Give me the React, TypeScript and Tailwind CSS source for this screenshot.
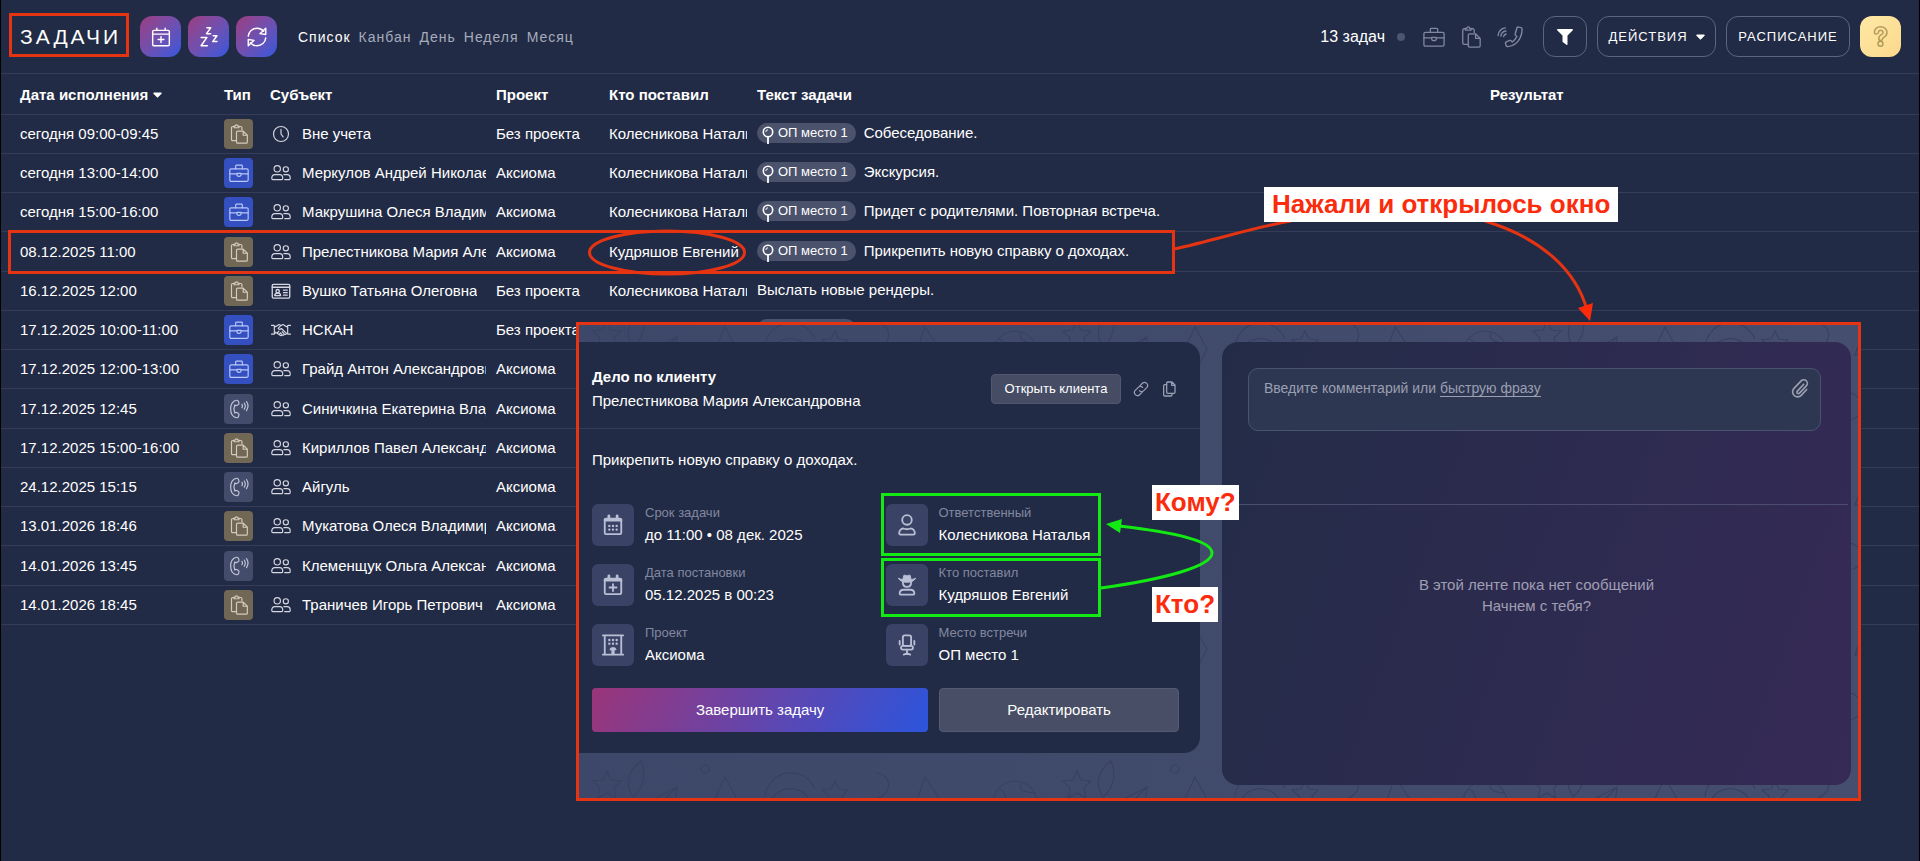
import type { ReactNode } from "react"

type IconProps = { className?: string }

function Icon({ className, children, width = 1.4 }: IconProps & { children: ReactNode; width?: number }) {
  return (
    <svg
      viewBox="0 0 24 24"
      fill="none"
      stroke="currentColor"
      strokeWidth={width}
      strokeLinecap="round"
      strokeLinejoin="round"
      className={className}
      aria-hidden="true"
    >
      {children}
    </svg>
  )
}

const BriefcaseIcon = ({ className }: IconProps) => (
  <Icon className={className}>
    <rect x="1" y="7" width="22" height="15" rx="1.5" />
    <path d="M8 7V3.500a1 1 0 0 1 1-1h6a1 1 0 0 1 1 1V7M1 13h8.500M14.500 13H23M9.500 12.500h5v1a2.500 2.500 0 0 1-5 0z" />
  </Icon>
)

const FilesIcon = ({ className }: IconProps) => (
  <Icon className={className}>
    <path d="M9 20H4.500A1.500 1.500 0 0 1 3 18.500v-14A1.500 1.500 0 0 1 4.500 3H6M12 3h2A1.500 1.500 0 0 1 15.500 4.500V7" />
    <path d="M6 4.500V2.500h1.500a1.500 1.500 0 0 1 3 0H12v2z" />
    <path d="M10.500 8.500H17l5 5V21.500a1.500 1.500 0 0 1-1.500 1.500h-10A1.500 1.500 0 0 1 9 21.500V10a1.500 1.500 0 0 1 1.500-1.500zM17 8.500v5h5" />
  </Icon>
)

const HandsetIcon = ({ className }: IconProps) => (
  <Icon className={className}>
    <path d="M9 1.500C4.500 2.500 2 7 2 12s2.500 9.500 7 10.500c1.200.2 2-.4 2.400-1.500l.5-1.700c.3-1-.1-1.700-1-2.200l-1.700-.9c-.9-.4-1.700-.1-2.300.6-1.200-2.900-1.200-6.700 0-9.600.6.7 1.400 1 2.300.6l1.700-.9c.9-.5 1.300-1.200 1-2.200L11.400 3c-.4-1.100-1.200-1.700-2.400-1.500z" />
    <path d="M15.500 6.500a3.500 3.500 0 0 1 0 4M18.300 4.800a6.500 6.500 0 0 1 0 7.400M21 3a10 10 0 0 1 0 11" />
  </Icon>
)

const IncomingCallIcon = ({ className }: IconProps) => (
  <svg viewBox="0 0 28 24" fill="none" stroke="currentColor" strokeWidth="1.500" strokeLinecap="round" strokeLinejoin="round" className={className} aria-hidden="true">
    <path d="M21.500 2.200c.3-.8 1-1.200 1.800-1l2.700.6c.8.200 1.200.8 1.200 1.600C27 14 21 21.500 11.500 22.500c-.8.100-1.500-.3-1.700-1l-.7-2.300c-.2-.8.100-1.500.9-1.900l3.700-1.500c.7-.3 1.400-.1 1.800.5l1 1.200c2.300-1.600 4-3.700 5-6.200l-1.300-1c-.6-.5-.8-1.200-.5-1.900z" />
    <path d="M1 10.500C1.500 6 4.500 2.500 9 2M4 11c.4-3 2.500-5.300 5.500-5.600M7 11.500c.3-1.400 1.300-2.500 2.800-2.800" />
  </svg>
)

const PeopleIcon = ({ className }: IconProps) => (
  <Icon className={className}>
    <circle cx="7.500" cy="7" r="3.800" />
    <circle cx="17.800" cy="7.600" r="3.100" />
    <path d="M1 19v-1.500A3.500 3.500 0 0 1 4.500 14h6a3.500 3.500 0 0 1 3.500 3.500V19a1 1 0 0 1-1 1H2a1 1 0 0 1-1-1zM15.500 14h4a3.500 3.500 0 0 1 3.500 3.500V19a1 1 0 0 1-1 1h-5.500" />
  </Icon>
)

const ClockIcon = ({ className }: IconProps) => (
  <Icon className={className}>
    <circle cx="12" cy="12" r="9" />
    <path d="M12 6.500V12l2.500 3.500" />
  </Icon>
)

const CardIcon = ({ className }: IconProps) => (
  <Icon className={className} width={1.6}>
    <rect x="1.500" y="4" width="21" height="16.500" rx="1.500" />
    <path d="M1.500 7.500h21M15 11h4.500M15 14h4.500M15 17h4.500M4.500 17.500a3.500 3 0 0 1 7 0z" />
    <circle cx="8" cy="12.200" r="2" />
  </Icon>
)

const HandshakeIcon = ({ className }: IconProps) => (
  <Icon className={className}>
    <path d="M0.500 6.500h3l2 1.500 4-2.500 2.500 1 2.500-1 4 2.500 2-1.500h3M.500 17h3l1.500-1M23.500 17h-3L19 16M4 7v9M20 7v9" />
    <path d="M12 6.500 8.500 10c.8 1.600 2.600 1.600 4 .2L18.500 16c-.3 1.500-1.500 1.700-2.500 1-.4 1.300-1.600 1.600-2.600.9-.7 1-2 1-2.900.1L5 14.500M8 15l1.500-1.500M10 17l1.500-1.500M13.500 14l2.500 3M11.500 15.500l2 2.400" />
  </Icon>
)

const CalendarPlusIcon = ({ className }: IconProps) => (
  <Icon className={className} width={1.7}>
    <rect x="2" y="4" width="20" height="18.500" rx="1.500" />
    <path d="M2 8.500h20M7 1.500V4M17 1.500V4M12 11.500v7M8.500 15h7" />
  </Icon>
)

const SnoozeIcon = ({ className }: IconProps) => (
  <Icon className={className} width={1.8}>
    <path d="M9.500 1h4.500l-5 7h5M2.500 12.500h7l-7 10h7.500M17 10.500h4.500l-5 7h5" />
  </Icon>
)

const RefreshIcon = ({ className }: IconProps) => (
  <Icon className={className} width={1.7}>
    <path d="M1.500 11C2 5.500 6.500 1.500 12 1.500c3.200 0 6 1.400 8 3.700M22.500 13C22 18.500 17.500 22.500 12 22.500c-3.200 0-6-1.400-8-3.700" />
    <path d="M22.500 1.500v7.500L15.500 8zM1.500 22.500V15l7 1z" />
  </Icon>
)

const PinIcon = ({ className }: IconProps) => (
  <svg viewBox="0 0 12 20" fill="none" stroke="currentColor" className={className} aria-hidden="true">
    <circle cx="6" cy="6" r="4.700" strokeWidth="1.600" />
    <path d="M6 10.700V18" strokeWidth="1.800" />
    <path d="M3.800 6A2.200 2.200 0 0 1 6 3.800" strokeWidth="1" />
  </svg>
)

const QuestionIcon = ({ className }: IconProps) => (
  <Icon className={className} width={1.7}>
    <path d="M5 7.500C5 3.500 8 .9 12 .9s7.400 2.600 7.400 6.500c0 3-1.800 4.500-4 5.800-.8.500-1.100.8-1.100 1.300a2.100 2.100 0 0 1-4.200 0c0-2.600 1.300-3.800 3.200-4.900 1.200-.7 1.700-1.200 1.700-2.200A2.700 2.700 0 0 0 12 4.900c-1.400 0-2.200.8-2.500 2.600-.4 2.400-4.500 2.300-4.500 0z" />
    <circle cx="12" cy="20.300" r="2.800" />
  </Icon>
)

const CalendarIcon = ({ className }: IconProps) => (
  <Icon className={className} width={2}>
    <rect x="3" y="5" width="18" height="17" rx="1.500" />
    <path d="M3.500 6.500h17" strokeWidth="3.500" />
    <path d="M7.500 2v3M16.500 2v3" strokeWidth="3" />
    <path d="M8 13h.01M12 13h.01M16 13h.01M8 17h.01M12 17h.01M16 17h.01" strokeWidth="2.600" />
  </Icon>
)

const CalendarAddIcon = ({ className }: IconProps) => (
  <Icon className={className} width={2}>
    <rect x="3" y="5" width="18" height="17" rx="1.500" />
    <path d="M3.500 6.500h17" strokeWidth="3.500" />
    <path d="M7.500 2v3M16.500 2v3" strokeWidth="3" />
    <path d="M12 11v7.500M8.200 14.700h7.600" />
  </Icon>
)

const BuildingIcon = ({ className }: IconProps) => (
  <Icon className={className} width={2}>
    <path d="M1 1.500h22M1 22.500h22M3 2v20M21 2v20" />
    <path d="M8 6.500h.01M12 6.500h.01M16 6.500h.01M8 10.500h.01M12 10.500h.01M16 10.500h.01" strokeWidth="2.600" />
    <path d="M8.500 17.500a3.500 3 0 0 1 7 0h-2v5h-3v-5z" fill="currentColor" strokeWidth="0.500" />
  </Icon>
)

const PersonIcon = ({ className }: IconProps) => (
  <Icon className={className} width={2}>
    <circle cx="12" cy="6.500" r="5.200" />
    <path d="M3.500 21a5 5 0 0 1 4.500-5.200c2.500 1 5.500 1 8 0a5 5 0 0 1 4.500 5.200 1.500 1.500 0 0 1-1.500 1.500H5A1.500 1.500 0 0 1 3.500 21z" />
  </Icon>
)

const HatPersonIcon = ({ className }: IconProps) => (
  <Icon className={className} width={2}>
    <path d="M7.500 6 8.500 1.500c1.300-.6 2.200.3 3.500.3s2.200-.9 3.500-.3l1 4.500c1.800-.1 3.300-.6 5-1.500-2 3.300-5 4.500-9.500 4.500S4.500 7.800 2.500 4.500c1.700.9 3.200 1.400 5 1.500z" fill="currentColor" strokeWidth="1" />
    <path d="M7.500 9c0 3 1.500 5 4.500 5s4.500-2 4.500-5M4 21.500c0-2.500 1.700-4.300 4.200-4.300h7.600c2.500 0 4.200 1.800 4.200 4.300a1 1 0 0 1-1 1H5a1 1 0 0 1-1-1z" />
  </Icon>
)

const ChairIcon = ({ className }: IconProps) => (
  <Icon className={className} width={2}>
    <rect x="7.500" y="1.500" width="9" height="11.500" rx="2" />
    <rect x="5.500" y="13" width="13" height="4" rx="2" />
    <path d="M4 7.500v4M20 7.500v4M12 17v5M8.500 22.500 12 21l3.500 1.500" />
  </Icon>
)

const LinkIcon = ({ className }: IconProps) => (
  <Icon className={className} width={1.8}>
    <path d="m10.500 7 3.600-3.600a4.600 4.600 0 0 1 6.500 6.500l-4.500 4.500a4.600 4.600 0 0 1-6.500 0" />
    <path d="m13.500 17-3.600 3.600a4.600 4.600 0 0 1-6.500-6.500l4.500-4.500a4.600 4.600 0 0 1 6.500 0" />
  </Icon>
)

const CopyIcon = ({ className }: IconProps) => (
  <Icon className={className} width={1.9}>
    <path d="M10 1.500h6.500L21 6v11a1.500 1.500 0 0 1-1.500 1.500H10A1.500 1.500 0 0 1 8.500 17V3A1.500 1.500 0 0 1 10 1.500zM16 1.500v5h5" />
    <path d="M8.500 5.500h-3A1.500 1.500 0 0 0 4 7v14a1.500 1.500 0 0 0 1.500 1.500H15a1.500 1.500 0 0 0 1.500-1.500v-2.500" />
  </Icon>
)

const ClipIcon = ({ className }: IconProps) => (
  <Icon className={className} width={2}>
    <path d="m16.500 7.500-7.700 8.200a1.800 1.800 0 0 0 2.600 2.500l8.200-8.800a4.300 4.300 0 0 0-6.200-6L4.800 12.500a6 6 0 0 0 8.700 8.300l6.500-7" />
  </Icon>
)

const Caret = () => (
  <svg viewBox="0 0 10 6" className="w-[9px] h-[6px]" fill="currentColor" aria-hidden="true">
    <path d="M1 .300h8a.7.700 0 0 1 .5 1.200L5.600 5.600a.8.800 0 0 1-1.200 0L.5 1.500A.7.700 0 0 1 1 .300z" />
  </svg>
)

const typeStyles = {
  doc: { label: "Документы", box: "bg-[#716755] text-[#d3ccbd]", icon: FilesIcon },
  meet: { label: "Встреча", box: "bg-[#344fc0] text-[#b9c8f7]", icon: BriefcaseIcon },
  call: { label: "Звонок", box: "bg-[#434c6a] text-[#c3c8d8]", icon: HandsetIcon },
}

const subjectIcons = { clock: ClockIcon, people: PeopleIcon, card: CardIcon, deal: HandshakeIcon }

type Task = {
  date: string
  type: keyof typeof typeStyles
  kind: keyof typeof subjectIcons
  subject: string
  project: string
  author?: string
  place?: string
  text?: string
}

const tasks: Task[] = [
  { date: "сегодня 09:00-09:45", type: "doc", kind: "clock", subject: "Вне учета", project: "Без проекта", author: "Колесникова Наталья", place: "ОП место 1", text: "Собеседование." },
  { date: "сегодня 13:00-14:00", type: "meet", kind: "people", subject: "Меркулов Андрей Николаевич", project: "Аксиома", author: "Колесникова Наталья", place: "ОП место 1", text: "Экскурсия." },
  { date: "сегодня 15:00-16:00", type: "meet", kind: "people", subject: "Макрушина Олеся Владимировна", project: "Аксиома", author: "Колесникова Наталья", place: "ОП место 1", text: "Придет с родителями. Повторная встреча." },
  { date: "08.12.2025 11:00", type: "doc", kind: "people", subject: "Прелестникова Мария Александровна", project: "Аксиома", author: "Кудряшов Евгений", place: "ОП место 1", text: "Прикрепить новую справку о доходах." },
  { date: "16.12.2025 12:00", type: "doc", kind: "card", subject: "Вушко Татьяна Олеговна", project: "Без проекта", author: "Колесникова Наталья", text: "Выслать новые рендеры." },
  { date: "17.12.2025 10:00-11:00", type: "meet", kind: "deal", subject: "НСКАН", project: "Без проекта", place: "ОП место 1" },
  { date: "17.12.2025 12:00-13:00", type: "meet", kind: "people", subject: "Грайд Антон Александрович", project: "Аксиома" },
  { date: "17.12.2025 12:45", type: "call", kind: "people", subject: "Синичкина Екатерина Владимировна", project: "Аксиома" },
  { date: "17.12.2025 15:00-16:00", type: "doc", kind: "people", subject: "Кириллов Павел Александрович", project: "Аксиома" },
  { date: "24.12.2025 15:15", type: "call", kind: "people", subject: "Айгуль", project: "Аксиома" },
  { date: "13.01.2026 18:46", type: "doc", kind: "people", subject: "Мукатова Олеся Владимировна", project: "Аксиома" },
  { date: "14.01.2026 13:45", type: "call", kind: "people", subject: "Клеменщук Ольга Александровна", project: "Аксиома" },
  { date: "14.01.2026 18:45", type: "doc", kind: "people", subject: "Траничев Игорь Петрович", project: "Аксиома" },
]

const details = [
  { label: "Срок задачи", value: "до 11:00 • 08 дек. 2025", icon: CalendarIcon },
  { label: "Ответственный", value: "Колесникова Наталья", icon: PersonIcon },
  { label: "Дата постановки", value: "05.12.2025 в 00:23", icon: CalendarAddIcon },
  { label: "Кто поставил", value: "Кудряшов Евгений", icon: HatPersonIcon },
  { label: "Проект", value: "Аксиома", icon: BuildingIcon },
  { label: "Место встречи", value: "ОП место 1", icon: ChairIcon },
]

const quickActions = [
  { label: "Новая задача", icon: CalendarPlusIcon },
  { label: "Отложить", icon: SnoozeIcon },
  { label: "Обновить", icon: RefreshIcon },
]

function Header() {
  return (
    <header className="flex items-center pl-[19px] pr-[18px] py-4">
      <h1 className="w-[120px] text-[21px] leading-7 tracking-[3px]">ЗАДАЧИ</h1>
      <div className="flex gap-[7px]">
        {quickActions.map(({ label, icon: ActionIcon }) => (
          <button
            key={label}
            aria-label={label}
            className="size-[41px] rounded-xl bg-linear-to-br from-[#9b3a80] to-[#2f56de] flex items-center justify-center"
          >
            <ActionIcon className="size-5" />
          </button>
        ))}
      </div>
      <nav className="flex gap-2 ml-[21px] text-sm tracking-[1px] text-[#a6abbd]">
        <a href="#list" className="text-white">Список</a>
        <a href="#kanban">Канбан</a>
        <a href="#day">День</a>
        <a href="#week">Неделя</a>
        <a href="#month">Месяц</a>
      </nav>

      <div className="flex items-center ml-auto">
        <span className="text-base">13 задач</span>
        <span className="size-2 rounded-full bg-[#4d5570] ml-3" />
        <div className="flex items-center gap-[15px] ml-[18px] mr-5 text-[#8288a0]">
          <BriefcaseIcon className="size-[22px]" />
          <FilesIcon className="size-[22px]" />
          <IncomingCallIcon className="w-[26px] h-[22px]" />
        </div>
        <div className="flex gap-[10px] text-[13px] tracking-[1px]">
          <button aria-label="Фильтр" className="w-11 h-[41px] rounded-xl border border-[#5d647e] flex items-center justify-center">
            <svg viewBox="0 0 16 16" className="size-4" fill="currentColor" aria-hidden="true">
              <path d="M.8 0h14.400c.7 0 1 .8.600 1.300L10.500 6.500v9c0 .4-.4.600-.8.400L6 13.200a1 1 0 0 1-.5-.8V6.500L.2 1.300C-.2.800.1 0 .8 0z" />
            </svg>
          </button>
          <button className="w-[119px] h-[41px] rounded-xl border border-[#5d647e] flex items-center justify-center gap-2">
            ДЕЙСТВИЯ <Caret />
          </button>
          <button className="w-[124px] h-[41px] rounded-xl border border-[#5d647e]">РАСПИСАНИЕ</button>
          <button
            aria-label="Помощь"
            className="size-[41px] rounded-xl bg-linear-to-br from-[#ffe9a6] to-[#fbd88b] text-[#b39a5b] flex items-center justify-center"
          >
            <QuestionIcon className="size-[21px]" />
          </button>
        </div>
      </div>
    </header>
  )
}

function TaskTable() {
  return (
    <table className="w-full table-fixed border-separate border-spacing-0 border-t border-[#343c58] text-left text-[15px] leading-5 [&_td]:border-b [&_td]:border-[#343c58] [&_td]:p-0 [&_th]:border-b [&_th]:border-[#343c58] [&_th]:p-0 [&_th]:pt-[2px]">
      <colgroup>
        <col className="w-[223px]" />
        <col className="w-[46px]" />
        <col className="w-[226px]" />
        <col className="w-[113px]" />
        <col className="w-[148px]" />
        <col className="w-[733px]" />
        <col />
      </colgroup>
      <thead>
        <tr className="h-[41px]">
          <th>
            <span className="flex items-center gap-[5px] pl-[19px]">
              Дата исполнения <Caret />
            </span>
          </th>
          <th>Тип</th>
          <th>Субъект</th>
          <th>Проект</th>
          <th>Кто поставил</th>
          <th>Текст задачи</th>
          <th>Результат</th>
        </tr>
      </thead>
      <tbody>
        {tasks.map((task) => {
          const type = typeStyles[task.type]
          const SubjectIcon = subjectIcons[task.kind]
          return (
            <tr key={task.date} className="h-[39px] nth-[4n]:h-10">
              <td>
                <div className="pl-[19px]">{task.date}</div>
              </td>
              <td>
                <div role="img" aria-label={type.label} className={`flex items-center justify-center w-[29px] h-[30px] rounded-sm ${type.box}`}>
                  <type.icon className="size-5" />
                </div>
              </td>
              <td>
                <div className="flex items-center gap-[11px] pl-px pr-[10px]">
                  <SubjectIcon className="size-5 shrink-0 text-[#d5d8e2]" />
                  <span className="overflow-hidden whitespace-nowrap">{task.subject}</span>
                </div>
              </td>
              <td className="whitespace-nowrap">{task.project}</td>
              <td>
                <div className="mr-[10px] overflow-hidden whitespace-nowrap">{task.author}</div>
              </td>
              <td>
                <div className="flex items-center gap-2 pb-[2px]">
                  {task.place && (
                    <span className="flex items-center gap-1 h-5 pl-[5px] pr-2 rounded-[10px] bg-[#4b526b] text-[13px]">
                      <PinIcon className="w-3 h-5 mt-[6px]" />
                      {task.place}
                    </span>
                  )}
                  {task.text}
                </div>
              </td>
              <td></td>
            </tr>
          )
        })}
      </tbody>
    </table>
  )
}

// Faint doodles behind the window panels
function Doodles() {
  return (
    <svg className="absolute inset-0 w-full h-full text-[#374060]" aria-hidden="true">
      <defs>
        <pattern id="doodles" width="470" height="150" patternUnits="userSpaceOnUse" patternTransform="translate(6 -18)">
          <g fill="none" stroke="currentColor" strokeWidth="1.200">
            <path d="m22 14 4 9 10 1-7 7 2 10-9-5-9 5 2-10-7-7 10-1z" />
            <path d="m92 30-30 16 10 4 3 10 5-8 9 3zM72 50l20-20" />
            <path d="M56 4c-14 10-16 24-8 36 10-8 14-22 8-36z" />
            <circle cx="120" cy="12" r="4" />
            <path d="m106 62 14 10m4 3a3 3 0 1 0 .1 0M140 20l-12 26h10l6 12 8-16z" />
            <circle cx="430" cy="46" r="22" />
            <path d="M414 32c8 2 4 12 12 12s6 10 0 18M436 26c-4 8 8 10 14 10M440 52c-6 4-2 10 4 8" />
            <path d="M362 94h42v30h-42zM362 104h42M368 94V82h30v12M370 110h10v10h-10zM386 110h10v10h-10z" />
            <path d="m60 96 3 7 8 1-6 5 2 8-7-4-7 4 2-8-6-5 8-1z" />
            <path d="M10 80c12-8 24 0 20 12s-20 16-26 8M92 102c10-14 26-8 28 4s-16 20-24 14" />
            <circle cx="22" cy="125" r="9" />
            <circle cx="22" cy="125" r="3" />
            <path d="M180 40a26 26 0 0 1 50-8M184 48a22 22 0 0 1 40-6M250 24l4 8 9 1-6 6 1 9-8-4-8 4 2-9-7-6 9-1z" />
            <path d="M290 16c12 0 16 10 12 18s-20 8-18 22M310 90c12-10 28-2 26 12s-22 14-28 6M318 100a3 3 0 1 0 .1 0" />
            <path d="M170 96c8-12 22-10 26 0s-8 22-14 30M230 90l8 20 14-14M262 112a10 10 0 1 0 20 0 10 10 0 1 0-20 0M340 20l16 24-26 4z" />
          </g>
        </pattern>
      </defs>
      <rect width="100%" height="100%" fill="url(#doodles)" />
    </svg>
  )
}

function TaskWindow() {
  return (
    <div role="dialog" aria-label="Дело по клиенту" className="absolute left-[575px] right-[58px] top-[322px] border-[3px] border-[#e63312] bg-linear-to-r from-[#3d4769] to-[#454e6e]">
      <Doodles />
      <div className="relative flex items-start gap-[22px] pt-[17px] pb-[13px] pr-[7px] text-[15px] leading-6">
        <section className="flex-[621] min-w-0 rounded-r-2xl bg-[#222b45]">
          <div className="flex items-center justify-between pt-[23px] pb-[15px] pl-[13px] pr-[21px] border-b border-[#343c58]">
            <div>
              <h2 className="font-bold">Дело по клиенту</h2>
              <p>Прелестникова Мария Александровна</p>
            </div>
            <div className="flex items-center text-[#9aa0b4]">
              <button className="w-[130px] h-[30px] rounded-sm bg-[#454c64] border border-[#50576f] text-[13px] leading-5 text-white">
                Открыть клиента
              </button>
              <button aria-label="Скопировать ссылку" className="ml-3">
                <LinkIcon className="size-4" />
              </button>
              <button aria-label="Копировать" className="ml-3 mr-[2px]">
                <CopyIcon className="size-4" />
              </button>
            </div>
          </div>

          <div className="pl-[13px] pr-[21px] pt-[19px] pb-[21px]">
            <p>Прикрепить новую справку о доходах.</p>
            <dl className="grid grid-cols-2 gap-y-[18px] mt-8">
              {details.map(({ label, value, icon: DetailIcon }) => (
                <div key={label} className="flex items-center gap-[11px] h-[42px]">
                  <span className="flex items-center justify-center size-[42px] rounded-md bg-[#3a4366] text-[#b9bfd4]">
                    <DetailIcon className="size-[22px]" />
                  </span>
                  <div>
                    <dt className="text-[13px] leading-5 text-[#8188a0]">{label}</dt>
                    <dd>{value}</dd>
                  </div>
                </div>
              ))}
            </dl>
            <div className="flex gap-[11px] mt-[22px]">
              <button className="flex-[338] h-11 rounded-sm bg-linear-[120deg] from-[#9b3579] to-[#2c55dd]">Завершить задачу</button>
              <button className="flex-[239] h-11 rounded-sm bg-[#474e65] border border-[#535a72]">Редактировать</button>
            </div>
          </div>
        </section>

        <section className="flex-[629] min-w-0 pt-[26px] pb-[169px] rounded-2xl bg-linear-[110deg] from-[#232c47] to-[#362a57]">
          <div className="relative ml-[26px] mr-[30px] text-sm leading-5 text-[#9a9fb2]">
            <textarea id="comment" className="block w-full h-[63px] resize-none rounded-[10px] border border-[#4a5370] bg-[#2e3751] px-4 py-[9px]" />
            <label htmlFor="comment" className="absolute left-4 top-[10px]">
              Введите комментарий или <a href="#phrases" className="border-b border-[#9a9fb2]">быструю фразу</a>
            </label>
            <button aria-label="Прикрепить файл" className="absolute right-[11px] top-[10px]">
              <ClipIcon className="size-5" />
            </button>
          </div>
          <div className="mt-[73px] mr-[3px] border-t border-[#4c4c6f]" />
          <p className="mt-[69px] text-center leading-[21px] text-[#a09eb3]">
            В этой ленте пока нет сообщений
            <br />
            Начнем с тебя?
          </p>
        </section>
      </div>
    </div>
  )
}

function Annotations() {
  return (
    <>
      <svg className="absolute inset-0 w-full h-full pointer-events-none" fill="none" aria-hidden="true">
        <g stroke="#e63312" strokeWidth="3">
          <rect x="9.500" y="14.500" width="117" height="41" />
          <rect x="8.500" y="231.500" width="1164" height="41" />
          <ellipse cx="666" cy="252.500" rx="77.500" ry="21.500" />
          <path d="M1173 249C1215 240 1250 228 1290 221" />
          <path d="M1484 221C1540 238 1575 270 1586 310" />
        </g>
        <path d="m1589 321-12-13 15-5z" fill="#ff2a0a" />
        <g stroke="#13ea13" strokeWidth="3">
          <rect x="881.500" y="494.500" width="217" height="60" />
          <rect x="881.500" y="559.500" width="217" height="56" />
          <path d="M1118 526C1170 532 1211 540 1211 553C1211 566 1165 579 1100 588" />
        </g>
        <path d="m1105 524 16-5-2 14z" fill="#13ea13" />
      </svg>
      <span className="absolute left-[1263px] top-[187px] px-2 bg-white text-[26px] leading-[35px] font-bold text-[#fb2c0d]">Нажали и открылось окно</span>
      <span className="absolute left-[1151px] top-[485px] px-[3px] bg-white text-[26px] leading-[35px] font-bold text-[#fb2c0d]">Кому?</span>
      <span className="absolute left-[1151px] top-[587px] px-[3px] bg-white text-[26px] leading-[35px] font-bold text-[#fb2c0d]">Кто?</span>
    </>
  )
}

export default function App() {
  return (
    <div className="relative min-h-screen overflow-hidden border-x border-black bg-[#222b45] font-['Liberation_Sans',Arial,sans-serif] text-white">
      <Header />
      <TaskTable />
      <TaskWindow />
      <Annotations />
    </div>
  )
}
